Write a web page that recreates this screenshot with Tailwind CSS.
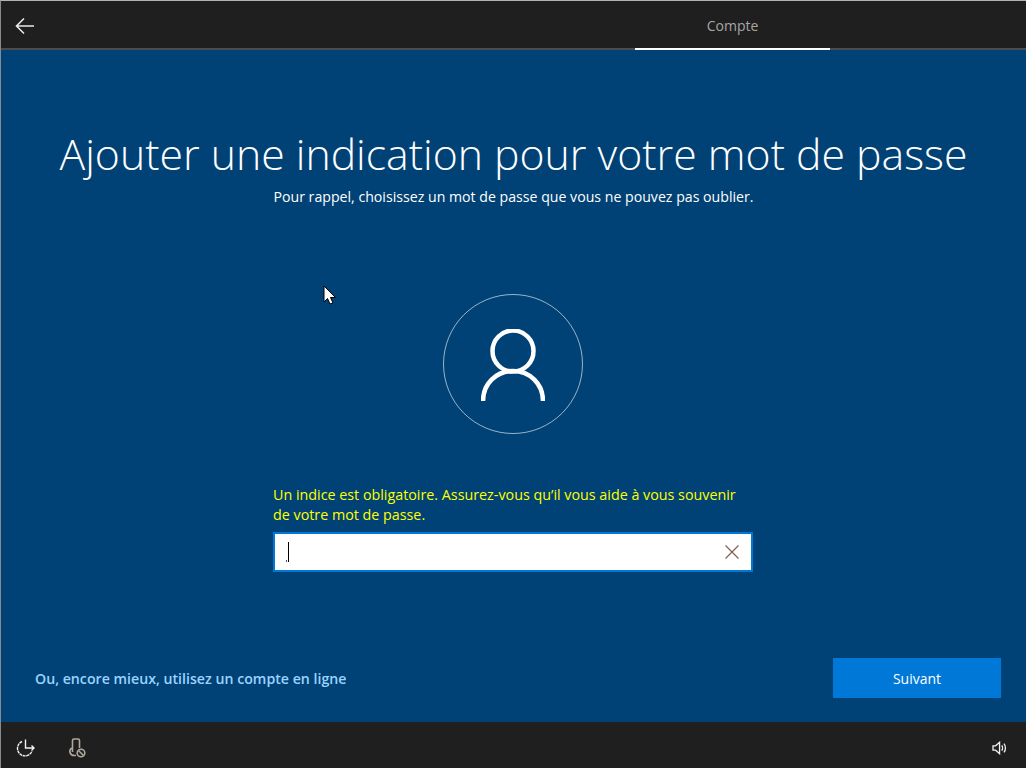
<!DOCTYPE html>
<html lang="fr">
<head>
    <meta charset="UTF-8">
    <title>Compte</title>
    <script src="https://cdn.jsdelivr.net/npm/@tailwindcss/browser@4"></script>
</head>
<body class="bg-[#004275]">
    <div class="relative w-[1026px] h-[768px] overflow-hidden flex flex-col border-l border-l-[#8a8a8a] border-t border-t-[#b5b3ae] font-['Open_Sans',sans-serif]">
        <!-- Top bar -->
        <div class="h-[49px] shrink-0 flex bg-[#1f1f1f] border-b-2 border-b-[#4c4c4c]">
            <button class="w-[48px] h-full flex items-center justify-center">
                <svg width="20" height="18" viewBox="0 0 20 18" fill="none" stroke="#e8e8e8" stroke-width="1.6" class="mt-[2px]">
                    <path d="M19 9H1.5M9 1.5L1.5 9L9 16.5"/>
                </svg>
            </button>
            <div class="ml-[586px] w-[195px] h-[49px] flex items-center justify-center border-b-2 border-b-white text-[14px] text-[#a6a6a6] pt-[2px]">Compte</div>
        </div>

        <!-- Main -->
        <div class="flex-1 flex flex-col items-center">
            <h1 class="mt-[73px] text-[42.75px] leading-[62px] font-light text-white whitespace-nowrap">Ajouter une indication pour votre mot de passe</h1>
            <p class="mt-[2px] text-[14.15px] leading-[20px] text-white">Pour rappel, choisissez un mot de passe que vous ne pouvez pas oublier.</p>

            <div class="mt-[87px] mr-[2px] w-[140px] h-[140px] rounded-full border border-white/60 flex items-center justify-center">
                <svg width="64" height="72" viewBox="0 0 64 72" fill="none" stroke="white" stroke-width="4.5" class="mt-[1px]">
                    <circle cx="32" cy="22" r="20.5"/>
                    <path d="M2 72C2 55 15 42 32 42C49 42 62 55 62 72"/>
                </svg>
            </div>

            <div class="mt-[51px] w-[480px] -ml-[1px]">
                <p class="text-[14.3px] leading-[20px] text-[#ffff00]">Un indice est obligatoire. Assurez-vous qu’il vous aide à vous souvenir<br>de votre mot de passe.</p>
                <div class="mt-[7px] h-[40px] bg-white border-2 border-[#0078d7] flex items-center justify-between pl-[11px] pr-[12px]">
                    <div class="flex items-end h-[20px]">
                        <span class="w-[1px] h-[2px] bg-[#335577]"></span>
                        <span class="w-[1px] h-[20px] bg-black ml-[1px]"></span>
                    </div>
                    <svg width="14" height="14" viewBox="0 0 14 14" stroke="#7a5a50" stroke-width="1.1">
                        <path d="M0.5 0.5L13.5 13.5M13.5 0.5L0.5 13.5"/>
                    </svg>
                </div>
            </div>

            <div class="mt-[86px] w-full flex items-center justify-between pl-[34px] pr-[25px]">
                <a class="text-[14.18px] font-semibold text-[#99d3ff] pt-[1px]">Ou, encore mieux, utilisez un compte en ligne</a>
                <button class="w-[168px] h-[40px] bg-[#0078d7] text-[14px] text-white">Suivant</button>
            </div>
        </div>

        <!-- Bottom bar -->
        <div class="h-[46px] shrink-0 bg-[#1f1f1f] flex items-center justify-between pl-[15px] pr-[18px] pt-[6px]">
            <div class="flex items-center gap-[32px]">
                <svg width="20" height="20" viewBox="0 0 20 20" fill="none" stroke="#f2f2f2" stroke-width="1.4">
                    <path d="M6 3.5A7.5 7.5 0 1 0 16 13" stroke-dasharray="3 0.6"/>
                    <path d="M9.5 1.5V10H18M15.5 7.5L18 10L15.5 12.5"/>
                </svg>
                <svg width="18" height="20" viewBox="0 0 18 20" fill="none" stroke="#b0a89c" stroke-width="1.6">
                    <path d="M4.5 14V2.5C4.5 1.5 5 1 6 1H10C11 1 11.5 1.5 11.5 2.5V10"/>
                    <path d="M4 10C2 11 1.5 12.5 2 14.5C2.5 16.5 4 17.5 6.5 17.5H8"/>
                    <circle cx="13" cy="15" r="3.8"/>
                    <path d="M10.5 12.5L15.5 17.5"/>
                </svg>
            </div>
            <svg width="16" height="14" viewBox="0 0 18 16" fill="none" stroke="#f2f2f2" stroke-width="1.5">
                <path d="M1 5.5H4L8.5 1.5V14.5L4 10.5H1Z"/>
                <path d="M11 5C12.2 6.5 12.2 9.5 11 11M13.5 3C15.8 5.5 15.8 10.5 13.5 13"/>
            </svg>
        </div>

        <!-- Mouse pointer -->
        <svg class="absolute left-[322px] top-[284px]" width="14" height="21" viewBox="0 0 14 21">
            <path d="M1 1V17L4.5 13.5L7 19L10 18L7.5 12.5H12.5Z" fill="white" stroke="black" stroke-width="1"/>
        </svg>
    </div>
</body>
</html>
